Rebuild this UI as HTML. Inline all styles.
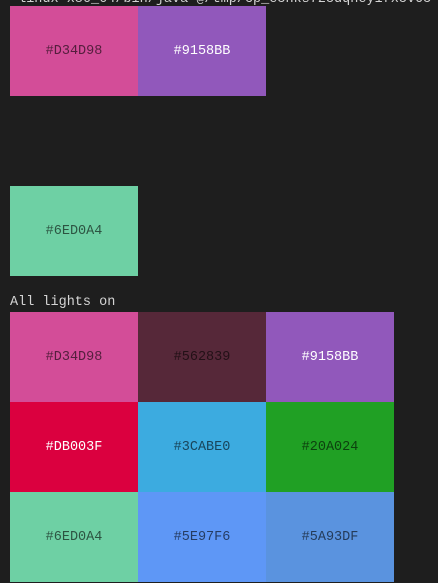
<!DOCTYPE html>
<html><head><meta charset="utf-8"><style>
html,body{margin:0;padding:0;background:#1e1e1e;width:438px;height:583px;overflow:hidden;position:relative;font-family:"Liberation Mono",monospace;font-size:13.5px}
.t{position:absolute;left:10px;color:#d4d4d4;white-space:pre}
.s{position:absolute;width:128px;height:90px;display:flex;align-items:center;justify-content:center;color:rgba(0,0,0,.6)}
.w{color:#fff}
</style></head><body>
<div class="t" style="top:-8px">-linux-x86_64/bin/java @/tmp/cp_e5hks7z5dqhey1fx5v05</div>
<div class="s" style="left:10px;top:6px;background:#D34D98">#D34D98</div>
<div class="s w" style="left:138px;top:6px;background:#9158BB">#9158BB</div>
<div class="s" style="left:10px;top:186px;background:#6ED0A4">#6ED0A4</div>
<div class="t" style="top:295px">All lights on</div>
<div class="s" style="left:10px;top:312px;background:#D34D98">#D34D98</div>
<div class="s" style="left:138px;top:312px;background:#562839">#562839</div>
<div class="s w" style="left:266px;top:312px;background:#9158BB">#9158BB</div>
<div class="s w" style="left:10px;top:402px;background:#DB003F">#DB003F</div>
<div class="s" style="left:138px;top:402px;background:#3CABE0">#3CABE0</div>
<div class="s" style="left:266px;top:402px;background:#20A024">#20A024</div>
<div class="s" style="left:10px;top:492px;background:#6ED0A4">#6ED0A4</div>
<div class="s" style="left:138px;top:492px;background:#5E97F6">#5E97F6</div>
<div class="s" style="left:266px;top:492px;background:#5A93DF">#5A93DF</div>
</body></html>
